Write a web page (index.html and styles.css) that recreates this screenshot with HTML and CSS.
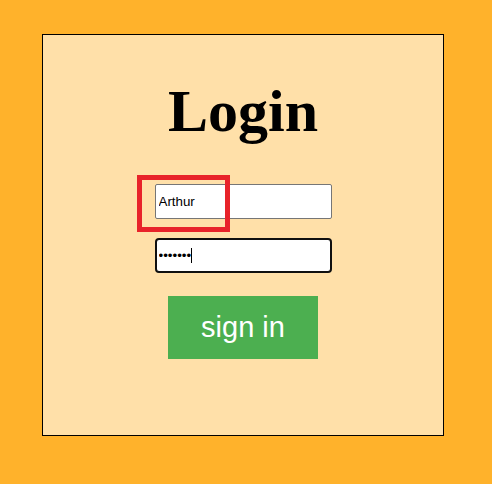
FILE: index.html
```html
<!DOCTYPE html>
<html>
<head>
<meta charset="utf-8">
<link rel="stylesheet" href="styles.css">
</head>
<body>
<div class="card">
  <h1 class="title">Login</h1>
  <form class="form">
    <input class="field" type="text" value="Arthur">
    <span class="pw-wrap">
      <input class="field field-focus" type="password" value="1234567">
      <span class="caret"></span>
    </span>
    <button class="btn" type="button">sign in</button>
  </form>
  <div class="highlight"></div>
</div>
</body>
</html>
```

FILE: styles.css
```css
html, body {
  margin: 0;
  padding: 0;
}
body {
  background: #FFB22B;
  width: 492px;
  height: 484px;
  overflow: hidden;
}
.card {
  position: relative;
  box-sizing: border-box;
  margin: 34px 0 0 42px;
  width: 402px;
  height: 402px;
  border: 1px solid #000;
  background: #FFE0A9;
  padding-top: 43px;
  display: flex;
  flex-direction: column;
  align-items: center;
}
.title {
  margin: 0;
  font-family: "Liberation Serif", "Times New Roman", serif;
  font-weight: bold;
  font-size: 60px;
  line-height: 66px;
  color: #000;
}
.form {
  margin-top: 40px;
  display: flex;
  flex-direction: column;
  align-items: center;
}
.field {
  box-sizing: border-box;
  width: 177px;
  height: 35px;
  margin: 0;
  padding: 0 3px;
  border: 1px solid #767676;
  border-radius: 2px;
  background: #fff;
  font-family: "Liberation Sans", Arial, sans-serif;
  font-size: 13.33px;
  color: #000;
  outline: none;
}
.pw-wrap {
  position: relative;
  display: block;
  margin-top: 19px;
}
.field-focus {
  border: 2px solid #101010;
  border-radius: 4px;
  padding: 0 2px;
}
.caret {
  position: absolute;
  left: 36px;
  top: 10px;
  width: 1px;
  height: 15px;
  background: #000;
}
.btn {
  margin-top: 23px;
  width: 150px;
  height: 63px;
  border: none;
  background: #4CAF50;
  color: #fff;
  font-family: "Liberation Sans", Arial, sans-serif;
  font-size: 29px;
  padding: 0;
  cursor: pointer;
}
.highlight {
  position: absolute;
  left: 94px;
  top: 140px;
  width: 93px;
  height: 57px;
  box-sizing: border-box;
  border: 5px solid #E8232A;
}
```
